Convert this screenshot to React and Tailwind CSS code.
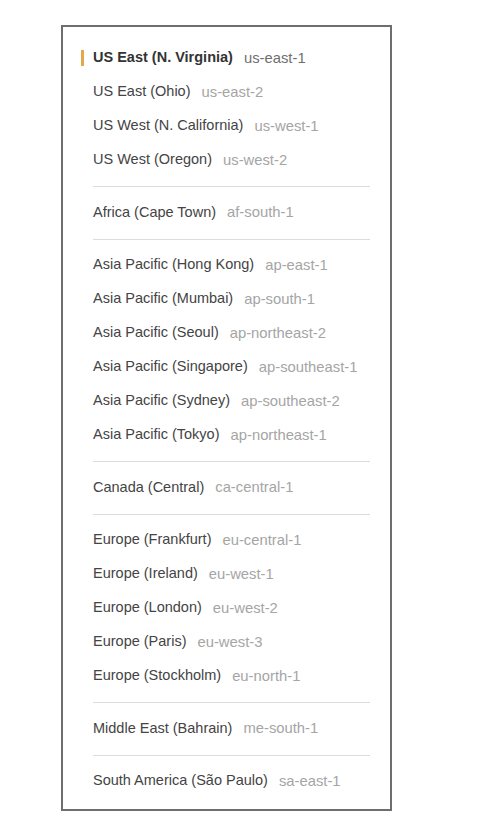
import React from "react";

const groups = [
  [
    ["US East (N. Virginia)", "us-east-1", true],
    ["US East (Ohio)", "us-east-2"],
    ["US West (N. California)", "us-west-1"],
    ["US West (Oregon)", "us-west-2"],
  ],
  [["Africa (Cape Town)", "af-south-1"]],
  [
    ["Asia Pacific (Hong Kong)", "ap-east-1"],
    ["Asia Pacific (Mumbai)", "ap-south-1"],
    ["Asia Pacific (Seoul)", "ap-northeast-2"],
    ["Asia Pacific (Singapore)", "ap-southeast-1"],
    ["Asia Pacific (Sydney)", "ap-southeast-2"],
    ["Asia Pacific (Tokyo)", "ap-northeast-1"],
  ],
  [["Canada (Central)", "ca-central-1"]],
  [
    ["Europe (Frankfurt)", "eu-central-1"],
    ["Europe (Ireland)", "eu-west-1"],
    ["Europe (London)", "eu-west-2"],
    ["Europe (Paris)", "eu-west-3"],
    ["Europe (Stockholm)", "eu-north-1"],
  ],
  [["Middle East (Bahrain)", "me-south-1"]],
  [["South America (São Paulo)", "sa-east-1"]],
];

function Row({ name, code, selected }) {
  return (
    <div className="relative flex h-[34px] items-center whitespace-nowrap">
      {selected && (
        <span className="absolute left-[-12px] top-[9px] h-[16px] w-[3px] bg-[#e3a84b]" />
      )}
      <span
        className={
          selected
            ? "text-[14.5px] font-bold text-[#333]"
            : "text-[14.5px] text-[#444]"
        }
      >
        {name}
      </span>
      <span
        className={
          selected
            ? "ml-[11px] text-[14.8px] text-[#6f6f6f]"
            : "ml-[11px] text-[14.8px] text-[#a5a5a5]"
        }
      >
        {code}
      </span>
    </div>
  );
}

export default function App() {
  return (
    <div
      className="min-h-[828px] w-[478px] bg-white pt-[25px] pl-[61px]"
      style={{ fontFamily: '"Liberation Sans", Arial, Helvetica, sans-serif' }}
    >
      <div className="w-[331px] border-2 border-[#6e6e6e] pt-[14px] pb-[11px] pl-[30px] pr-[20px]">
        {groups.map((g, gi) => (
          <div key={gi}>
            {gi > 0 && <div className="mt-[9px] mb-[8.5px] h-px bg-[#dcdcdc]" />}
            {g.map(([name, code, sel]) => (
              <Row key={code} name={name} code={code} selected={sel} />
            ))}
          </div>
        ))}
      </div>
    </div>
  );
}
